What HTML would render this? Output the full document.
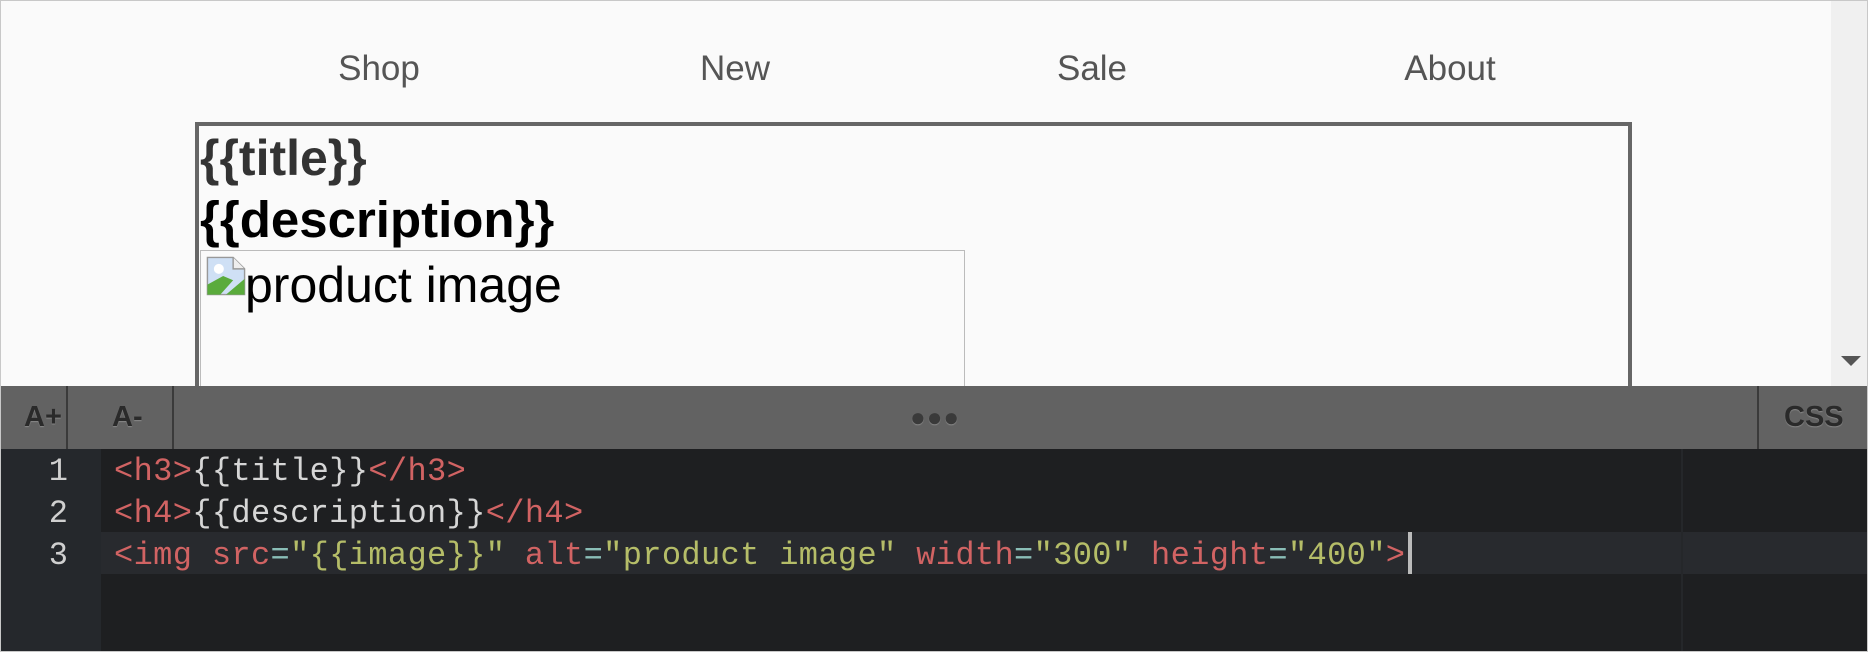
<!DOCTYPE html>
<html><head><meta charset="utf-8"><style>
*{margin:0;padding:0;box-sizing:border-box}
body{width:1868px;height:652px;overflow:hidden;background:#fafafa;font-family:"Liberation Sans",Arial,sans-serif;position:relative}
.frame{position:absolute;inset:0;border:1px solid #c8c8c8;pointer-events:none;z-index:9}
.nav{position:absolute;top:49px;font-size:35px;color:#555;transform:translateX(-50%)}
.scroll{position:absolute;right:0;top:0;width:37px;height:386px;background:#f0f0f0}
.arrow{position:absolute;right:7px;top:356px;width:0;height:0;border-left:10px solid transparent;border-right:10px solid transparent;border-top:10px solid #555}
.box{position:absolute;left:195px;top:122px;width:1437px;height:300px;border:4px solid #666;border-bottom:none}
.h3{position:absolute;left:200px;top:129px;font-weight:bold;font-size:50px;color:#333}
.h4{position:absolute;left:200px;top:190px;font-weight:bold;font-size:51px;color:#000}
.img{position:absolute;left:200px;top:250px;width:765px;height:140px;border:1px solid #bbb;border-bottom:none}
.img span{position:absolute;left:44px;top:5px;font-size:50px;color:#000}
.ic{position:absolute;left:5px;top:5px;width:40px;height:40px}
.bar{position:absolute;left:0;top:386px;width:1868px;height:63px;background:#626262;color:#2a2a2a;font-weight:bold;font-size:29px}
.bar .b{position:absolute;top:0;height:63px;line-height:63px;text-shadow:0 1px 1px #888}
.div{position:absolute;top:0;width:2px;height:63px;background:#3a3a3a}
.ed{position:absolute;left:0;top:449px;width:1868px;height:203px;background:#1e1f21;font-family:"Liberation Mono",monospace;font-size:32px}
.gut{position:absolute;left:0;top:0;width:101px;height:203px;background:#25282c}
.ln{position:absolute;left:0;width:68px;text-align:right;color:#d0d0d0}
.act{position:absolute;left:101px;top:83px;right:0;height:42px;background:#282a2e}
.vl{position:absolute;left:1681px;top:0;width:2px;height:203px;background:#25272a}
.code{position:absolute;left:114px;white-space:pre;color:#d6d6d6;letter-spacing:0.36px}
.t{color:#d16363}.s{color:#b5bd68}.o{color:#8abeb7}
.cur{position:absolute;left:1408px;top:83px;width:4px;height:42px;background:#bbb}
</style></head><body>
<div class="nav" style="left:379px">Shop</div>
<div class="nav" style="left:735px">New</div>
<div class="nav" style="left:1092px">Sale</div>
<div class="nav" style="left:1450px">About</div>
<div class="scroll"><div class="arrow"></div></div>
<div class="box"></div>
<div class="h3">{{title}}</div>
<div class="h4">{{description}}</div>
<div class="img"><svg class="ic" viewBox="0 0 28 28"><path d="M1 1h18l8 8v18H1z" fill="#cfe0f5" stroke="#999"/><path d="M19 1v8h8" fill="#eee" stroke="#999"/><path d="M1 27 L1 20 L12 14 L19 17 L10 27z" fill="#5aab3c"/><path d="M14 27 L27 16 V27z" fill="#5aab3c"/><circle cx="9" cy="9" r="3.5" fill="#fff"/></svg><span>product image</span></div>
<div class="bar">
<div class="b" style="left:24px">A+</div><div class="div" style="left:66px"></div>
<div class="b" style="left:112px">A-</div><div class="div" style="left:172px"></div>
<div class="b" style="left:910px;font-size:26px;letter-spacing:1px;color:#3a3a3a">●●●</div>
<div class="div" style="left:1757px"></div>
<div class="b" style="left:1784px">CSS</div>
</div>
<div class="ed">
<div class="gut"></div><div class="act"></div><div class="vl"></div>
<div class="ln" style="top:2px;line-height:42px">1</div>
<div class="ln" style="top:44px;line-height:42px">2</div>
<div class="ln" style="top:86px;line-height:42px">3</div>
<div class="code" style="top:2px;line-height:42px"><span class="t">&lt;h3&gt;</span>{{title}}<span class="t">&lt;/h3&gt;</span></div>
<div class="code" style="top:44px;line-height:42px"><span class="t">&lt;h4&gt;</span>{{description}}<span class="t">&lt;/h4&gt;</span></div>
<div class="code" style="top:86px;line-height:42px"><span class="t">&lt;img src</span><span class="o">=</span><span class="s">"{{image}}"</span> <span class="t">alt</span><span class="o">=</span><span class="s">"product image"</span> <span class="t">width</span><span class="o">=</span><span class="s">"300"</span> <span class="t">height</span><span class="o">=</span><span class="s">"400"</span><span class="t">&gt;</span></div>
<div class="cur"></div>
</div>
<div class="frame"></div>
</body></html>
